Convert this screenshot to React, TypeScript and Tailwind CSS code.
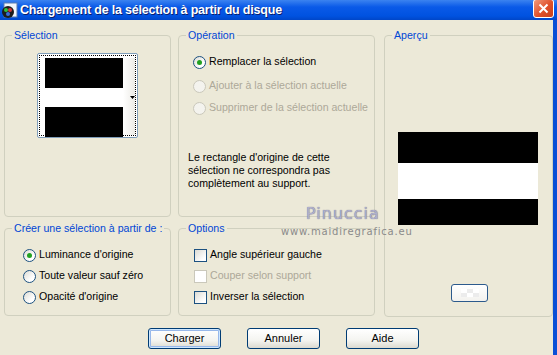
import React from 'react';

const font = { fontFamily: '"Liberation Sans", Arial, sans-serif' };

const Radio = ({ checked = false, disabled = false, label }: { checked?: boolean; disabled?: boolean; label: string }) => (
  <div className="flex h-[16px] items-center gap-[3px] whitespace-nowrap">
    <span
      className={`flex h-[13px] w-[13px] shrink-0 items-center justify-center rounded-full border ${
        disabled ? 'border-[#cac8bb] bg-[#f4f3ee]' : 'border-[#1c5180] bg-[linear-gradient(135deg,#dcdbd4,#ffffff_70%)]'
      }`}
    >
      {checked && <span className="h-[5px] w-[5px] rounded-full bg-[#21a121]" />}
    </span>
    <span className={disabled ? 'text-[#aca899]' : 'text-black'}>{label}</span>
  </div>
);

const Check = ({ disabled = false, label }: { disabled?: boolean; label: string }) => (
  <div className="flex h-[16px] items-center gap-[3px] whitespace-nowrap">
    <span
      className={`h-[13px] w-[13px] shrink-0 border ${
        disabled ? 'border-[#cac8bb] bg-white' : 'border-[#1c5180] bg-[linear-gradient(135deg,#dcdbd4,#ffffff_80%)]'
      }`}
    />
    <span className={disabled ? 'text-[#aca899]' : 'text-black'}>{label}</span>
  </div>
);

const Group = ({ title, className, children }: { title: string; className: string; children?: React.ReactNode }) => (
  <fieldset className={`min-w-0 rounded-[4px] border border-[#d0d0bf] ${className}`}>
    <legend className="ml-[7px] whitespace-nowrap px-[2px] leading-[13px] text-[#0046d5]">{title}</legend>
    {children}
  </fieldset>
);

const Band = ({ top, mid, bottom }: { top: string; mid: string; bottom: string }) => (
  <div className="flex flex-col">
    <div className={`bg-black ${top}`} />
    <div className={`bg-white ${mid}`} />
    <div className={`bg-black ${bottom}`} />
  </div>
);

const XpButton = ({ label, primary = false }: { label: string; primary?: boolean }) => (
  <button
    className={`h-[21px] w-[73px] rounded-[3px] border border-[#003c74] bg-[linear-gradient(180deg,#ffffff,#f4f4f0_60%,#dcdad0)] text-[11px] text-black ${
      primary ? 'shadow-[inset_0_0_0_1px_#cee7ff,inset_0_0_0_2px_#98b8ea]' : ''
    }`}
  >
    {label}
  </button>
);

export default function App() {
  return (
    <div className="relative h-[355px] w-[557px] overflow-hidden bg-[#ece9d8] text-[10.6px]" style={font}>
      {/* title bar */}
      <div className="flex h-[20px] items-center bg-[linear-gradient(180deg,#3b83f0,#0a5ae8_35%,#0052e0_80%,#0046c8)] pr-[3px]">
        <svg width="17" height="17" viewBox="0 0 17 17" className="ml-[1px]">
          <rect x="3" y="1" width="13" height="14" fill="#f2f6fb" stroke="#5a7db0" />
          <circle cx="7" cy="10" r="6" fill="#1d1d1d" />
          <circle cx="5" cy="8" r="2" fill="#2fbf3c" />
          <circle cx="9" cy="8" r="2" fill="#d13a3a" />
          <circle cx="7" cy="12" r="2" fill="#3a6fd8" />
        </svg>
        <span className="ml-[2px] text-[12.5px] font-bold tracking-[-0.2px] text-white [text-shadow:1px_1px_0_#0a1e6e]">
          Chargement de la sélection à partir du disque
        </span>
        <div className="ml-auto flex h-[19px] w-[21px] -translate-y-[2px] items-center justify-center rounded-[3px] border border-white bg-[linear-gradient(135deg,#f09a7c,#e0502a_55%,#c8401c)]">
          <svg width="11" height="11" viewBox="0 0 11 11">
            <path d="M1.5 1.5 L9.5 9.5 M9.5 1.5 L1.5 9.5" stroke="white" strokeWidth="2" />
          </svg>
        </div>
      </div>

      {/* right window frame */}
      <div className="absolute right-0 top-[20px] h-[335px] w-[4px] bg-[#0a4fd6]" />

      <div className="flex pl-[4px] pt-[9px]">
        {/* left column */}
        <div className="flex w-[167px] flex-col gap-[5px]">
          <Group title="Sélection" className="h-[188px]">
            <div className="mx-auto mt-[11px] h-[85px] w-[101px] rounded-[2px] border border-[#7f9db9] bg-white p-[1px]">
              <div className="flex h-full border border-dotted border-black bg-white pl-[5px] pt-[2px]">
                <div className="w-[80px]">
                  <Band top="h-[30px]" mid="h-[19px]" bottom="h-[30px]" />
                </div>
                <div className="flex w-[12px] items-center justify-end bg-[linear-gradient(90deg,#ffffff,#ecebe6)]">
                  <svg width="5" height="3" viewBox="0 0 5 3" className="mt-[2px]">
                    <path d="M0 0 H5 L2.5 3 Z" fill="black" />
                  </svg>
                </div>
              </div>
            </div>
          </Group>
          <Group title="Créer une sélection à partir de :" className="h-[94px]">
            <div className="mt-[12px] flex flex-col gap-[5px] pl-[18px]">
              <Radio checked label="Luminance d'origine" />
              <Radio label="Toute valeur sauf zéro" />
              <Radio label="Opacité d'origine" />
            </div>
          </Group>
        </div>

        {/* middle column */}
        <div className="ml-[7px] flex w-[197px] flex-col gap-[5px]">
          <Group title="Opération" className="h-[188px]">
            <div className="mt-[12px] flex flex-col pl-[14px]">
              <Radio checked label="Remplacer la sélection" />
              <div className="mt-[8px]">
                <Radio disabled label="Ajouter à la sélection actuelle" />
              </div>
              <div className="mt-[6px]">
                <Radio disabled label="Supprimer de la sélection actuelle" />
              </div>
            </div>
            <p className="mt-[35px] pl-[9px] leading-[13px] text-black">
              Le rectangle d'origine de cette
              <br />
              sélection ne correspondra pas
              <br />
              complètement au support.
            </p>
          </Group>
          <Group title="Options" className="h-[94px]">
            <div className="mt-[12px] flex flex-col gap-[5px] pl-[15px]">
              <Check label="Angle supérieur gauche" />
              <Check disabled label="Couper selon support" />
              <Check label="Inverser la sélection" />
            </div>
          </Group>
        </div>

        {/* right column */}
        <div className="ml-[9px] w-[169px]">
          <Group title="Aperçu" className="h-[288px]">
            <div className="ml-[13px] mt-[90px] w-[140px]">
              <Band top="h-[31px]" mid="h-[36px]" bottom="h-[26px]" />
            </div>
            <div className="ml-[66px] mt-[59px] flex h-[18px] w-[37px] items-center justify-center rounded-[3px] border border-[#2c5a8c] bg-[linear-gradient(180deg,#ffffff,#f3f2ee)]">
              <div className="grid h-[8px] w-[18px] grid-cols-3 grid-rows-2">
                <span className="bg-white" />
                <span className="bg-[#ececec]" />
                <span className="bg-white" />
                <span className="bg-[#ececec]" />
                <span className="bg-white" />
                <span className="bg-[#ececec]" />
              </div>
            </div>
          </Group>
        </div>
      </div>

      {/* buttons */}
      <div className="mt-[11px] flex gap-[26px] pl-[148px]">
        <XpButton label="Charger" primary />
        <XpButton label="Annuler" />
        <XpButton label="Aide" />
      </div>

      {/* watermark */}
      <div
        className="pointer-events-none absolute left-[306px] top-[202px] text-[16px] tracking-[1px] text-[#b0b0cc] [text-shadow:0_0_1px_#55557a]"
        style={{ fontFamily: '"DejaVu Sans", sans-serif' }}
      >
        Pinuccia
      </div>
      <div
        className="pointer-events-none absolute left-[281px] top-[224px] text-[10px] tracking-[0.8px] text-[#8a8a8a]"
        style={{ fontFamily: '"DejaVu Sans", sans-serif' }}
      >
        www.maidiregrafica.eu
      </div>
    </div>
  );
}
